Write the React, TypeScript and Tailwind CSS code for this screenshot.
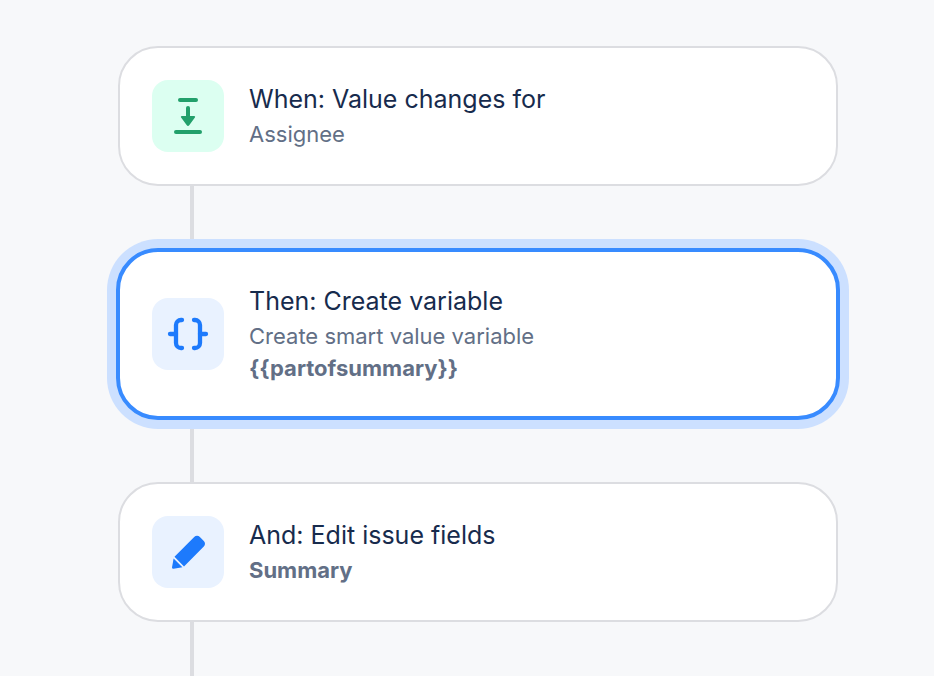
import { Fragment, type ReactNode } from 'react';
import clsx from 'clsx';

function ValueChangedIcon() {
  return (
    <svg viewBox="0 0 72 72" className="size-full" aria-hidden="true">
      <g fill="none" stroke="currentColor" strokeWidth="4" strokeLinecap="round">
        <path d="M28 20h16" />
        <path d="M36 28v10" />
        <path d="M24 52h24" />
      </g>
      <path
        fill="currentColor"
        d="M29.8 36h12.4a.9.9 0 0 1 .7 1.5l-5.5 7.6a1.8 1.8 0 0 1-2.8 0l-5.5-7.6A.9.9 0 0 1 29.8 36z"
      />
    </svg>
  );
}

function BracesIcon() {
  return (
    <svg viewBox="0 0 72 72" className="size-full" aria-hidden="true">
      <g fill="none" stroke="currentColor" strokeWidth="4.3" strokeLinecap="round">
        <path d="M30 22h-1a5 5 0 0 0-5 5v18a5 5 0 0 0 5 5h1" />
        <path d="M18 36h6" />
        <path d="M42 22h1a5 5 0 0 1 5 5v18a5 5 0 0 1-5 5h-1" />
        <path d="M48 36h6" />
      </g>
    </svg>
  );
}

function PencilIcon() {
  return (
    <svg viewBox="0 0 72 72" className="size-full" fill="currentColor" aria-hidden="true">
      <path d="M22.5 40.7 42.2 21A4 4 0 0 1 47.9 21L51.8 24.9A4 4 0 0 1 51.8 30.6L32 50.4z" />
      <path d="M21.6 42.6 30.4 51.2 21.6 52.8Q20 53 20 51.4z" />
    </svg>
  );
}

type Step = {
  id: number;
  title: string;
  detail?: string;
  value?: string;
  icon: ReactNode;
  tone: 'green' | 'blue';
  selected?: boolean;
};

const steps: Step[] = [
  { id: 1, title: 'When: Value changes for', detail: 'Assignee', icon: <ValueChangedIcon />, tone: 'green' },
  {
    id: 2,
    title: 'Then: Create variable',
    detail: 'Create smart value variable',
    value: '{{partofsummary}}',
    icon: <BracesIcon />,
    tone: 'blue',
    selected: true,
  },
  { id: 3, title: 'And: Edit issue fields', value: 'Summary', icon: <PencilIcon />, tone: 'blue' },
];

function StepCard({ step }: { step: Step }) {
  return (
    <button
      type="button"
      aria-pressed={!!step.selected}
      className={clsx(
        'flex items-center gap-[25px] bg-white px-8 text-left cursor-pointer',
        step.selected
          ? 'z-10 -mx-0.5 rounded-[42px] border-4 border-[#388bff] py-[30px] ring-9 ring-[#cce0ff]'
          : 'rounded-[40px] border-2 border-[#dcdde1] py-8',
      )}
    >
      <span
        className={clsx(
          'size-18 shrink-0 rounded-2xl',
          step.tone === 'green' ? 'bg-[#dcfff1] text-[#22a06b]' : 'bg-[#e9f2ff] text-[#1d7afc]',
        )}
      >
        {step.icon}
      </span>
      <span className="min-w-0 pb-0.5">
        <span className="block text-[25px] leading-[38px] text-[#172b4d]">{step.title}</span>
        {step.detail && <span className="block text-[22px] leading-8 text-[#626f86]">{step.detail}</span>}
        {step.value && <span className="block text-[22px] leading-8 font-bold text-[#626f86]">{step.value}</span>}
      </span>
    </button>
  );
}

export default function App() {
  return (
    <main className="flex min-h-screen flex-col bg-[#f7f8fa] pt-[46px] pr-24 pl-[118px] font-['Inter','Liberation_Sans',sans-serif]">
      {steps.map((step, i) => (
        <Fragment key={step.id}>
          <StepCard step={step} />
          <div
            className={clsx('ml-18 w-1 bg-[#dcdde1]', i < steps.length - 1 ? 'h-[62px]' : 'min-h-12 flex-1')}
          />
        </Fragment>
      ))}
    </main>
  );
}
